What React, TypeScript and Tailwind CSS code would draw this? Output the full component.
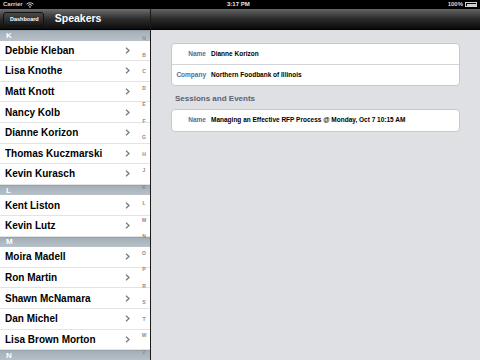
import React from 'react';

const sections: { letter: string; names: string[] }[] = [
  { letter: 'K', names: ['Debbie Kleban', 'Lisa Knothe', 'Matt Knott', 'Nancy Kolb', 'Dianne Korizon', 'Thomas Kuczmarski', 'Kevin Kurasch'] },
  { letter: 'L', names: ['Kent Liston', 'Kevin Lutz'] },
  { letter: 'M', names: ['Moira Madell', 'Ron Martin', 'Shawn McNamara', 'Dan Michel', 'Lisa Brown Morton'] },
  { letter: 'N', names: [] },
];

const indexLetters = ['B', 'C', 'D', 'E', 'F', 'G', 'H', 'J', 'K', 'L', 'M', 'N', 'O', 'P', 'R', 'S', 'T', 'W', 'Z'];

const Chevron = () => (
  <svg width="5" height="7" viewBox="0 0 5 7" className="shrink-0">
    <path d="M1 0.8 L4 3.5 L1 6.2" fill="none" stroke="#7a7a7a" strokeWidth="1.3" />
  </svg>
);

const DetailRow = ({ label, value, last }: { label: string; value: string; last?: boolean }) => (
  <div className={`flex items-center h-[20.5px] ${last ? '' : 'border-b border-[#d4d5d8]'}`}>
    <span className="w-[34px] text-right text-[6.5px] font-bold text-[#566b95]">{label}</span>
    <span className="ml-[5px] text-[6.5px] font-bold text-black">{value}</span>
  </div>
);

export default function App() {
  return (
    <div className="w-[480px] h-[360px] overflow-hidden flex flex-col bg-black" style={{ fontFamily: '"Liberation Sans", Arial, sans-serif' }}>
      {/* Status bar */}
      <div className="h-[9px] bg-black relative flex items-center px-[3px] text-white text-[6px] font-bold shrink-0">
        <span className="text-[#d8d8d8]">Carrier</span>
        <svg width="8" height="6" viewBox="0 0 8 6" className="ml-[3px]">
          <path d="M0.5 2.2 A5 5 0 0 1 7.5 2.2" fill="none" stroke="#e0e0e0" strokeWidth="0.9" />
          <path d="M1.9 3.5 A3 3 0 0 1 6.1 3.5" fill="none" stroke="#e0e0e0" strokeWidth="0.9" />
          <path d="M4 6 L2.9 4.7 A1.6 1.6 0 0 1 5.1 4.7 Z" fill="#e0e0e0" />
        </svg>
        <span className="absolute left-[227px] text-[#e8e8e8]">3:17 PM</span>
        <div className="ml-auto flex items-center gap-[2px]">
          <span className="text-[#d8d8d8]">100%</span>
          <div className="w-[12px] h-[5px] border border-[#d0d0d0] p-[0.5px] flex">
            <div className="flex-1 bg-[#d0d0d0]" />
          </div>
        </div>
      </div>

      <div className="flex flex-1 min-h-0">
        {/* Master column */}
        <div className="w-[150px] flex flex-col shrink-0">
          <div className="h-[21px] bg-gradient-to-b from-[#6e6e6e] via-[#2d2d2d] to-[#0c0c0c] flex items-center px-[3px] border-b border-black">
            <div className="relative h-[14px] flex items-center pl-[6px] pr-[4px] rounded-[3px] bg-gradient-to-b from-[#4a4a4a] to-[#1a1a1a] border border-[#111] text-white text-[5.5px] font-bold">
              Dashboard
            </div>
            <span className="ml-[11px] text-white text-[10.5px] font-bold">Speakers</span>
          </div>
          <div className="relative flex-1 bg-white overflow-hidden">
            {sections.map((s) => (
              <div key={s.letter}>
                <div className="h-[10.6px] bg-gradient-to-b from-[#a3afb8] to-[#b9c1c8] border-t border-[#98a4ad] flex items-center pl-[6px] text-white text-[8px] font-bold">
                  {s.letter}
                </div>
                {s.names.map((n) => (
                  <div key={n} className="h-[20.6px] flex items-center pl-[5px] pr-[20px] border-b border-[#e3e3e3]">
                    <span className="flex-1 text-[10px] font-bold text-black">{n}</span>
                    <Chevron />
                  </div>
                ))}
              </div>
            ))}
            {/* Index overlay */}
            <div className="absolute right-0 top-[6px] w-[12px] flex flex-col items-center text-[#8a8a8a] text-[5px] font-bold">
              <div className="h-[16.5px] flex items-start">
                <svg width="5" height="5" viewBox="0 0 5 5">
                  <circle cx="2" cy="2" r="1.4" fill="none" stroke="#8a8a8a" strokeWidth="0.8" />
                  <path d="M3 3 L4.5 4.5" stroke="#8a8a8a" strokeWidth="0.8" />
                </svg>
              </div>
              {indexLetters.map((l) => (
                <div key={l} className="h-[16.5px] leading-[5px]">{l}</div>
              ))}
            </div>
          </div>
        </div>

        {/* Divider */}
        <div className="w-[1px] bg-[#1a1a1a] shrink-0" />

        {/* Detail column */}
        <div className="flex-1 flex flex-col">
          <div className="h-[21px] bg-gradient-to-b from-[#666] via-[#2a2a2a] to-[#0a0a0a] border-b border-black" />
          <div className="flex-1 bg-[#dfe0e4] px-[20px] pt-[13px]">
            <div className="bg-white rounded-[4px] border border-[#c6c8cc]">
              <DetailRow label="Name" value="Dianne Korizon" />
              <DetailRow label="Company" value="Northern Foodbank of Illinois" last />
            </div>
            <div className="mt-[7px] pl-[4px] text-[8px] font-bold text-[#5a6274]">Sessions and Events</div>
            <div className="mt-[4px] bg-white rounded-[4px] border border-[#c6c8cc]">
              <DetailRow label="Name" value="Managing an Effective RFP Process @ Monday, Oct 7 10:15 AM" last />
            </div>
          </div>
        </div>
      </div>
    </div>
  );
}
